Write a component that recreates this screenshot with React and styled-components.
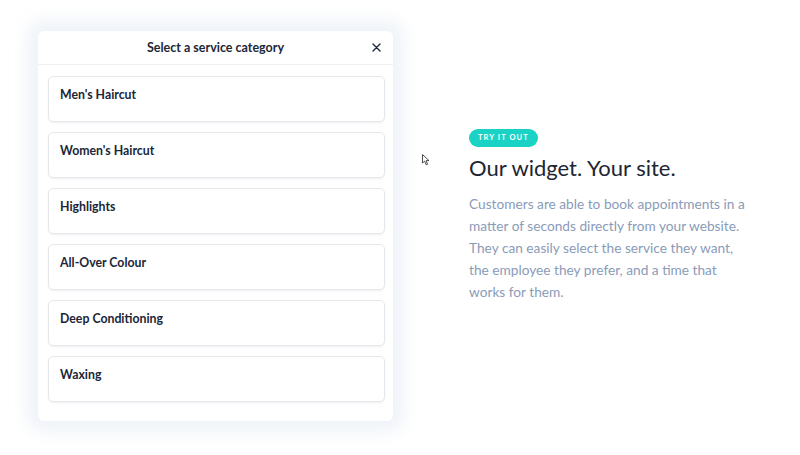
import React from "react"
import styled, { createGlobalStyle } from "styled-components"

const GlobalStyle = createGlobalStyle`
  html, body {
    margin: 0;
    padding: 0;
    background: #ffffff;
  }
  body {
    font-family: "Lato", "Liberation Sans", sans-serif;
    -webkit-font-smoothing: antialiased;
  }
`

const services = [
  "Men's Haircut",
  "Women's Haircut",
  "Highlights",
  "All-Over Colour",
  "Deep Conditioning",
  "Waxing",
]

const Page = styled.div`
  position: relative;
  width: 800px;
  height: 455px;
  overflow: hidden;
  display: flex;
  align-items: flex-start;
  padding: 31px 0 0 38px;
  box-sizing: border-box;
`

/** Widget modal on the left */
const Widget = styled.div`
  width: 355px;
  background: #ffffff;
  border-radius: 6px;
  box-shadow: 0 0 16px 11px rgba(232, 238, 245, 0.7);
`

const WidgetHeader = styled.div`
  position: relative;
  height: 33px;
  display: flex;
  align-items: center;
  justify-content: center;
  border-bottom: 1px solid #eef0f3;
  font-size: 12.5px;
  font-weight: 700;
  color: #1c2839;
`

const CloseButton = styled.button`
  position: absolute;
  right: 10px;
  top: 9px;
  width: 14px;
  height: 14px;
  padding: 0;
  border: 0;
  background: none;
  display: flex;
  align-items: center;
  justify-content: center;
`

const ServiceList = styled.div`
  display: flex;
  flex-direction: column;
  gap: 10px;
  padding: 11px 8px 19px 10px;
`

const ServiceCard = styled.div`
  height: 46px;
  box-sizing: border-box;
  padding: 10px 11px;
  border: 1px solid #e4e7eb;
  border-radius: 5px;
  box-shadow: 0 1px 2px rgba(20, 40, 70, 0.07);
  font-size: 12.3px;
  font-weight: 700;
  color: #1a2638;
`

/** Marketing copy on the right */
const Copy = styled.div`
  margin-left: 76px;
  padding-top: 93px;
  width: 282px;
`

const Badge = styled.span`
  display: inline-block;
  height: 18px;
  line-height: 18px;
  padding: 0 9px;
  border-radius: 9px;
  background: #1ad3c4;
  color: #ffffff;
  font-size: 7.5px;
  font-weight: 700;
  letter-spacing: 1.1px;
`

const Title = styled.h2`
  margin: 7px 0 0;
  font-size: 22px;
  font-weight: 400;
  color: #1d2633;
  white-space: nowrap;
`

const Body = styled.p`
  margin: 12px 0 0;
  font-size: 13.7px;
  line-height: 22px;
  color: #8a9bb8;
`

const Cursor = styled.svg`
  position: absolute;
  left: 422px;
  top: 154px;
`

export default function App() {
  return (
    <Page>
      <GlobalStyle />
      <Widget>
        <WidgetHeader>
          Select a service category
          <CloseButton aria-label="Close">
            <svg width="9" height="9" viewBox="0 0 9 9">
              <path
                d="M1 1L8 8M8 1L1 8"
                stroke="#1c2839"
                strokeWidth="1.4"
                strokeLinecap="round"
              />
            </svg>
          </CloseButton>
        </WidgetHeader>
        <ServiceList>
          {services.map(name => (
            <ServiceCard key={name}>{name}</ServiceCard>
          ))}
        </ServiceList>
      </Widget>
      <Copy>
        <Badge>TRY IT OUT</Badge>
        <Title>Our widget. Your site.</Title>
        <Body>
          Customers are able to book appointments in a matter of seconds
          directly from your website. They can easily select the service they
          want, the employee they prefer, and a time that works for them.
        </Body>
      </Copy>
      <Cursor width="8" height="12" viewBox="0 0 8 12">
        <path
          d="M0.5 0.5L0.5 9L2.6 7.2L4.2 10.8L5.6 10.2L4 6.7L7 6.6Z"
          fill="#ffffff"
          stroke="#222"
          strokeWidth="0.8"
        />
      </Cursor>
    </Page>
  )
}
